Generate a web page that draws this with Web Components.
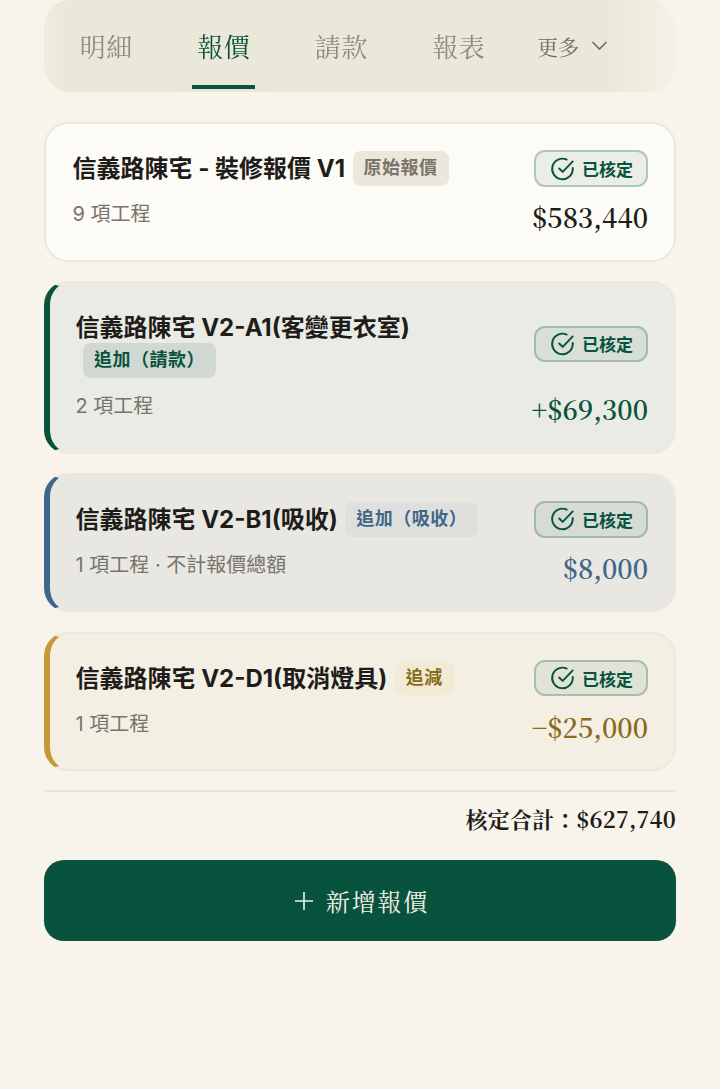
<!DOCTYPE html>
<html lang="zh-Hant">
<head>
<meta charset="utf-8">
<title>報價</title>
<style>
  html, body { margin: 0; background: #f8f4ec; }
  body { font-family: Inter, "Noto Sans CJK TC", sans-serif; }
</style>
</head>
<body>
<template id="tpl-page">
  <style>
    :host { display: flex; flex-direction: column; padding: 0 44px; min-height: 1089px; box-sizing: border-box; }
    .list { display: flex; flex-direction: column; gap: 19.2px; margin-top: 30px; }
  </style>
  <slot name="tabs"></slot>
  <div class="list"><slot></slot></div>
  <slot name="footer"></slot>
</template>

<template id="tpl-tabs">
  <style>
    :host { display: flex; align-items: stretch; height: 92px; background: #ece8d9; border-radius: 26px; padding: 0 8px 0 3px; box-sizing: border-box; position: relative; font-family: "Noto Serif CJK TC", "Liberation Serif", serif; -webkit-mask-image: linear-gradient(90deg, rgba(0,0,0,.75) 0, #000 3%, #000 90%, rgba(0,0,0,.55) 96%, rgba(0,0,0,.15) 100%); mask-image: linear-gradient(90deg, rgba(0,0,0,.75) 0, #000 3%, #000 90%, rgba(0,0,0,.55) 96%, rgba(0,0,0,.15) 100%); }
    .more { display: flex; align-items: center; gap: 12px; margin-left: 20px; padding-bottom: 1px; font-size: 21px; color: #6f6b60; }
    svg { width: 17px; height: 17px; fill: none; stroke: #6f6b60; stroke-width: 1.6; }
  </style>
  <slot></slot>
  <div class="more"><span>更多</span><svg viewBox="0 0 17 17"><path d="M1.5 5l7 7 7-7"/></svg></div>
</template>

<template id="tpl-tab">
  <style>
    :host { display: flex; align-items: center; justify-content: center; width: 117.5px; height: 92px; position: relative; padding-bottom: 2px; padding-left: 1px; box-sizing: border-box; font-size: 26px; letter-spacing: .5px; color: #8f8b7d; }
    :host([active]) { color: #08533d; }
    :host([active])::before { content: ""; position: absolute; left: 4px; right: 4px; top: 8px; bottom: 4px; border-radius: 18px; box-shadow: 0 2px 4px rgba(120,110,70,.025); }
    :host([active])::after { content: ""; position: absolute; left: 27px; width: 63px; bottom: 3px; height: 4px; background: #08533d; }
  </style>
  <slot></slot>
</template>

<template id="tpl-card">
  <style>
    :host { display: block; box-sizing: border-box; padding: 26px 26px 24.5px 26.5px; border: 2px solid #ece9da; border-radius: 24px; background: #fdfbf5; }
    :host([kind]) { border-left-width: 6px; padding-left: 25.5px; }
    :host([kind="a"]) { background: #e9ebe4; border-left-color: #08533d; }
    :host([kind="b"]) { background: #e8e7e2; border-left-color: #3f6789; }
    :host([kind="d"]) { background: #f4efe3; border-left-color: #c49b33; }
    .row { display: flex; justify-content: space-between; }
    .top { align-items: center; gap: 10px; }
    .bottom { align-items: flex-start; margin-top: 12px; }
    .title { margin: 0; padding: 2px 0 1.5px; font-size: 24px; line-height: 33.5px; font-weight: 700; color: #1e1d1a; flex: 1; min-width: 0; }
    .sub { font-size: 20px; line-height: 30px; color: #77746c; }
    .price { font-family: "Noto Serif CJK TC", "Liberation Serif", serif; font-size: 26.5px; line-height: 36px; font-weight: 600; color: #1e1d1a; }
    :host([kind="a"]) .price { color: #08533d; }
    :host([kind="b"]) .price { color: #3f6789; }
    :host([kind="d"]) .price { color: #8a6a1b; }
  </style>
  <div class="row top">
    <h3 class="title"><slot name="title"></slot><slot name="tag"></slot></h3>
    <status-badge>已核定</status-badge>
  </div>
  <div class="row bottom">
    <span class="sub"><slot name="sub"></slot></span>
    <span class="price"><slot name="price"></slot></span>
  </div>
</template>

<template id="tpl-tag">
  <style>
    :host { display: inline-block; vertical-align: top; margin: -.75px 0 -.25px 7.5px; padding: 0 11px; height: 34.5px; line-height: 34.5px; border-radius: 8px; font-size: 18px; font-weight: 700; letter-spacing: .5px; background: #ece7dc; color: #7b7568; }
    :host([kind="a"]) { background: #d0d8d1; color: #08533d; }
    :host([kind="b"]) { background: #dfe0dd; color: #3f6789; }
    :host([kind="d"]) { background: #f1ebd6; color: #8a6a1b; }
  </style>
  <slot></slot>
</template>

<template id="tpl-badge">
  <style>
    :host { display: flex; align-items: center; flex: none; gap: 6px; box-sizing: border-box; width: 114px; height: 36.5px; padding-left: 14px; border: 2px solid rgba(8,83,61,.26); border-radius: 11px; background: rgba(8,83,61,.08); color: #08533d; font-size: 17px; font-weight: 700; }
    svg { width: 26px; height: 26px; fill: none; stroke: #08533d; stroke-width: 1.8; stroke-linecap: round; stroke-linejoin: round; }
  </style>
  <svg viewBox="0 0 24 24"><path d="M21 11v1a9.5 9.5 0 1 1-5.6-8.7"/><path d="M8.5 11.5l3.2 3.2L21 5"/></svg>
  <span><slot></slot></span>
</template>

<template id="tpl-footer">
  <style>
    :host { display: block; }
    .total { border-top: 2px solid #e8e5e8; margin-top: 19px; padding-top: 11px; text-align: right; font-family: "Noto Serif CJK TC", "Liberation Serif", serif; font-size: 22px; letter-spacing: .15px; line-height: 32px; font-weight: 700; color: #1e1d1a; }
    button { display: flex; align-items: center; justify-content: center; gap: 13px; width: 100%; height: 81px; margin-top: 25px; padding: 0 0 0 4px; box-sizing: border-box; border: 0; border-radius: 20px; background: #08533d; color: #f4f1e6; font: inherit; font-family: "Noto Serif CJK TC", "Liberation Serif", serif; font-size: 24px; letter-spacing: 1.8px; }
    svg { width: 18px; height: 18px; stroke: #f4f1e6; stroke-width: 1.6; fill: none; }
  </style>
  <div class="total"><slot name="total"></slot></div>
  <button><svg viewBox="0 0 18 18"><path d="M9 0v18M0 9h18"/></svg><span><slot name="action"></slot></span></button>
</template>

<quote-page>
  <tab-bar slot="tabs">
    <tab-item>明細</tab-item>
    <tab-item active>報價</tab-item>
    <tab-item>請款</tab-item>
    <tab-item>報表</tab-item>
  </tab-bar>

  <quote-card>
    <span slot="title">信義路陳宅 - 裝修報價 V1</span>
    <quote-tag slot="tag">原始報價</quote-tag>
    <span slot="sub">9 項工程</span>
    <span slot="price">$583,440</span>
  </quote-card>

  <quote-card kind="a">
    <span slot="title">信義路陳宅 V2-A1(客變更衣室)</span>
    <quote-tag slot="tag" kind="a">追加（請款）</quote-tag>
    <span slot="sub">2 項工程</span>
    <span slot="price">+$69,300</span>
  </quote-card>

  <quote-card kind="b">
    <span slot="title">信義路陳宅 V2-B1(吸收)</span>
    <quote-tag slot="tag" kind="b">追加（吸收）</quote-tag>
    <span slot="sub">1 項工程 · 不計報價總額</span>
    <span slot="price">$8,000</span>
  </quote-card>

  <quote-card kind="d">
    <span slot="title">信義路陳宅 V2-D1(取消燈具)</span>
    <quote-tag slot="tag" kind="d">追減</quote-tag>
    <span slot="sub">1 項工程</span>
    <span slot="price">−$25,000</span>
  </quote-card>

  <quote-footer slot="footer">
    <span slot="total">核定合計：$627,740</span>
    <span slot="action">新增報價</span>
  </quote-footer>
</quote-page>

<script>
  function define(name, tplId) {
    customElements.define(name, class extends HTMLElement {
      constructor() {
        super();
        const shadow = this.attachShadow({ mode: "open" });
        shadow.appendChild(document.getElementById(tplId).content.cloneNode(true));
      }
    });
  }
  define("quote-page", "tpl-page");
  define("tab-bar", "tpl-tabs");
  define("tab-item", "tpl-tab");
  define("quote-card", "tpl-card");
  define("quote-tag", "tpl-tag");
  define("status-badge", "tpl-badge");
  define("quote-footer", "tpl-footer");
</script>
</body>
</html>
